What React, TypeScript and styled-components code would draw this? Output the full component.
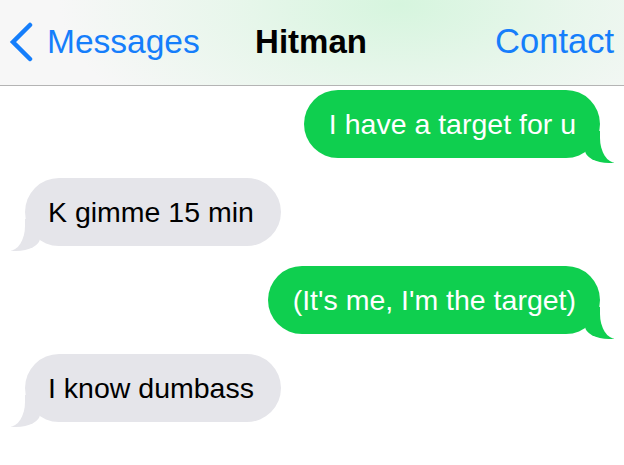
import React from 'react';
import styled, { createGlobalStyle, css } from 'styled-components';

const GlobalStyle = createGlobalStyle`
  html, body {
    margin: 0;
    padding: 0;
    background: #ffffff;
  }
  body {
    font-family: "Helvetica Neue", "Liberation Sans", Arial, sans-serif;
    -webkit-font-smoothing: antialiased;
  }
`;

const Screen = styled.div`
  width: 624px;
  height: 465px;
  overflow: hidden;
  background: #ffffff;
`;

const NavBar = styled.header`
  height: 86px;
  box-sizing: border-box;
  display: grid;
  grid-template-columns: 1fr auto 1fr;
  align-items: center;
  padding: 0 10px 2px 8px;
  border-bottom: 1px solid #b4b4b4;
  background:
    radial-gradient(ellipse 340px 160px at 64% 5%, rgba(214, 245, 222, 1), rgba(226, 246, 231, 0.7) 50%, rgba(247, 247, 247, 0) 100%),
    #f7f7f7;
`;

const BackButton = styled.div`
  display: flex;
  align-items: center;
  gap: 13px;
  color: #157efb;
  font-size: 33.5px;
`;

const Title = styled.div`
  font-size: 33px;
  font-weight: 700;
  color: #000000;
`;

const Action = styled.div`
  justify-self: end;
  font-size: 34.5px;
  color: #157efb;
`;

const Thread = styled.main`
  display: flex;
  flex-direction: column;
  gap: 20px;
  padding: 4px 24px 0 25px;
`;

const Bubble = styled.div<{ $sent: boolean }>`
  position: relative;
  align-self: ${p => (p.$sent ? 'flex-end' : 'flex-start')};
  height: 68px;
  box-sizing: border-box;
  display: flex;
  align-items: center;
  padding: ${p => (p.$sent ? '0 24px 0 25px' : '0 27px 0 23px')};
  border-radius: 34px;
  font-size: 28.5px;
  background: ${p => (p.$sent ? '#0fcf4f' : '#e5e5ea')};
  color: ${p => (p.$sent ? '#ffffff' : '#000000')};

  &::before,
  &::after {
    content: '';
    position: absolute;
    bottom: -5px;
    height: 32px;
  }

  ${p =>
    p.$sent
      ? css`
          &::before {
            right: -14px;
            width: 29px;
            background: #0fcf4f;
            border-bottom-left-radius: 24px 13px;
          }
          &::after {
            right: -30px;
            width: 30px;
            background: #ffffff;
            border-bottom-left-radius: 16px 25px;
          }
        `
      : css`
          &::before {
            left: -14px;
            width: 29px;
            background: #e5e5ea;
            border-bottom-right-radius: 24px 13px;
          }
          &::after {
            left: -30px;
            width: 30px;
            background: #ffffff;
            border-bottom-right-radius: 16px 25px;
          }
        `}
`;

const messages = [
  { sent: true, text: 'I have a target for u' },
  { sent: false, text: 'K gimme 15 min' },
  { sent: true, text: "(It's me, I'm the target)" },
  { sent: false, text: 'I know dumbass' },
];

const Chevron = () => (
  <svg width="26" height="40" viewBox="0 0 26 40">
    <polyline
      points="22,3 5,20 22,37"
      fill="none"
      stroke="#157efb"
      strokeWidth="4.5"
      strokeLinecap="round"
      strokeLinejoin="miter"
    />
  </svg>
);

const App: React.FC = () => {
  return (
    <Screen>
      <GlobalStyle />
      <NavBar>
        <BackButton>
          <Chevron />
          Messages
        </BackButton>
        <Title>Hitman</Title>
        <Action>Contact</Action>
      </NavBar>
      <Thread>
        {messages.map((m, i) => (
          <Bubble key={i} $sent={m.sent}>
            {m.text}
          </Bubble>
        ))}
      </Thread>
    </Screen>
  );
};

export default App;
